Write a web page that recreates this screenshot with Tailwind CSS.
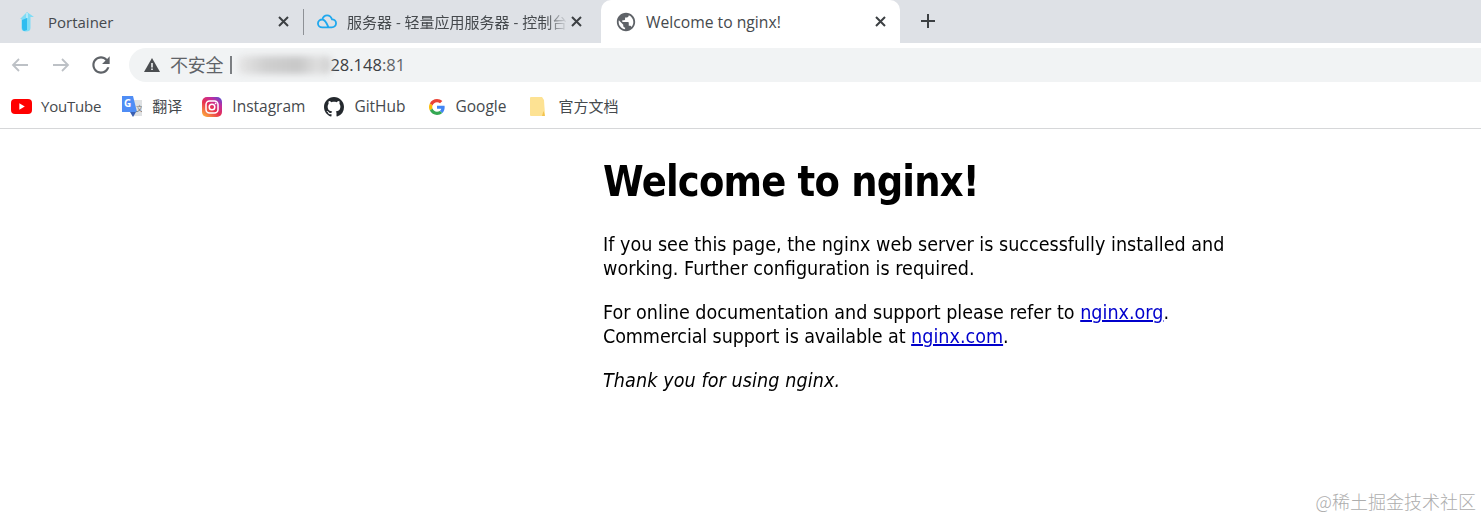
<!DOCTYPE html>
<html lang="zh">
<head>
    <meta charset="UTF-8">
    <title>Welcome to nginx!</title>
    <script src="https://cdn.jsdelivr.net/npm/@tailwindcss/browser@4"></script>
</head>
<body class="relative w-[1481px] h-[518px] overflow-hidden bg-white font-['Open_Sans','Noto_Sans_CJK_SC',sans-serif]">
    <!-- tabs -->
    <div class="flex h-[43px] bg-[#dee1e6] text-[15px] text-[#45494d]">
        <div class="flex items-center w-[303px] pl-[18px] pr-[14px]">
            <svg class="w-[18px] h-[20px] shrink-0" viewBox="0 0 18 20">
                <path d="M9 0 L16 5 L12.5 5 L12.5 16 Q12.5 19.5 8 19.5 Q3.5 19.5 3.5 16 L3.5 7 L2 7 Z" fill="#7fdcf5"/>
                <path d="M4 8 L9 6 V18 L6 19 Q4 18 4 16 Z" fill="#2fbdf0"/>
                <path d="M9 1 V6" stroke="#c5edf8" stroke-width="1.5"/>
            </svg>
            <span class="ml-[12px] flex-1 translate-y-px">Portainer</span>
            <svg class="w-[11px] h-[11px] shrink-0" viewBox="0 0 11 11"><path d="M1 1 L10 10 M10 1 L1 10" stroke="#3c4043" stroke-width="2"/></svg>
        </div>
        <div class="w-px h-[26px] mt-[9px] bg-[#8e9196]"></div>
        <div class="flex items-center w-[291px] pl-[13px] pr-[13px]">
            <svg class="w-[20px] h-[15px] shrink-0" viewBox="0 0 21 15" fill="none">
                <path d="M5.5 13.6 H15.5 C18.2 13.6 20 11.7 20 9.4 C20 7 18 5.3 15.8 5.3 C14.9 2.6 13 1 10.6 1 C8 1 6.2 2.9 5.6 5.4 C3 5.4 1 7.2 1 9.6 C1 11.9 3 13.6 5.5 13.6 Z M5.6 5.4 C8 5.4 9.5 7.5 12 13.4" stroke="#1fa8ee" stroke-width="1.9"/>
            </svg>
            <span class="ml-[10px] w-[221px] overflow-hidden whitespace-nowrap translate-y-px [mask-image:linear-gradient(to_right,black_90%,transparent)]">服务器 - 轻量应用服务器 - 控制台</span>
            <svg class="ml-auto w-[11px] h-[11px] shrink-0" viewBox="0 0 11 11"><path d="M1 1 L10 10 M10 1 L1 10" stroke="#3c4043" stroke-width="2"/></svg>
        </div>
        <div class="flex items-center w-[299px] ml-[6px] pl-[14px] pr-[14px] bg-white rounded-t-[10px]">
            <svg class="w-[22px] h-[22px] shrink-0" viewBox="0 0 24 24"><path fill="#5f6368" d="M12 2C6.48 2 2 6.48 2 12s4.48 10 10 10 10-4.48 10-10S17.52 2 12 2zm-1 17.93c-3.95-.49-7-3.85-7-7.93 0-.62.08-1.21.21-1.79L9 15v1c0 1.1.9 2 2 2v1.93zm6.9-2.54c-.26-.81-1-1.39-1.9-1.39h-1v-3c0-.55-.45-1-1-1H8v-2h2c.55 0 1-.45 1-1V7h2c1.1 0 2-.9 2-2v-.41c2.93 1.19 5 4.06 5 7.41 0 2.08-.8 3.97-2.1 5.39z"/></svg>
            <span class="ml-[9px] flex-1 text-[15.7px] translate-y-px">Welcome to nginx!</span>
            <svg class="w-[11px] h-[11px] shrink-0" viewBox="0 0 11 11"><path d="M1 1 L10 10 M10 1 L1 10" stroke="#3c4043" stroke-width="2"/></svg>
        </div>
        <svg class="w-[16px] h-[16px] ml-[20px] mt-[13px] shrink-0" viewBox="0 0 16 16"><path d="M8 1 V15 M1 8 H15" stroke="#3c4043" stroke-width="2"/></svg>
    </div>

    <!-- address row -->
    <div class="flex items-start h-[40px] pt-[5px] bg-white">
        <svg class="w-[18px] h-[16px] ml-[11px] mt-[9px] shrink-0" viewBox="0 0 18 16" fill="none"><path d="M17 8 H2 M8 2 L2 8 L8 14" stroke="#bdc1c6" stroke-width="1.8"/></svg>
        <svg class="w-[18px] h-[16px] ml-[23px] mt-[9px] shrink-0" viewBox="0 0 18 16" fill="none"><path d="M1 8 H16 M10 2 L16 8 L10 14" stroke="#bdc1c6" stroke-width="1.8"/></svg>
        <svg class="w-[26px] h-[26px] ml-[18px] mt-[4px] shrink-0" viewBox="0 0 24 24"><path fill="#5f6368" d="M17.65 6.35C16.2 4.9 14.21 4 12 4c-4.42 0-7.99 3.58-7.99 8s3.57 8 7.99 8c3.73 0 6.84-2.55 7.73-6h-2.08c-.82 2.33-3.04 4-5.65 4-3.31 0-6-2.69-6-6s2.69-6 6-6c1.66 0 3.14.69 4.22 1.78L13 11h7V4l-2.35 2.35z"/></svg>
        <div class="flex items-center flex-1 h-[34px] ml-[15px] pl-[15px] bg-[#f1f3f4] rounded-l-[17px] text-[18px] text-[#5f6368]">
            <svg class="w-[16px] h-[14px] shrink-0" viewBox="0 0 16 14"><path fill="#4a4d50" d="M8 0 L16 14 H0 Z"/><path fill="#f1f3f4" d="M7.2 5 H8.8 V9.5 H7.2 Z M7.2 10.5 H8.8 V12 H7.2 Z"/></svg>
            <span class="ml-[10px] whitespace-nowrap tracking-[-0.2px]">不安全</span>
            <span class="ml-[7px] w-[2px] h-[18px] bg-[#7b7e82] shrink-0"></span>
            <div class="w-[93px] h-[18px] ml-[6px] mr-[-1px] rounded-[5px] blur-[3px] bg-[linear-gradient(90deg,#e6e6e6_0%,#cfcfcf_30%,#c8c8c8_65%,#dedede_85%,#cfcfcf_100%)]"></div>
            <span class="whitespace-nowrap text-[16.5px]"><span class="text-[#3c4043]">28.148</span>:81</span>
        </div>
    </div>

    <!-- bookmarks -->
    <div class="flex items-center h-[46px] pt-[2px] border-b border-[#d6d7d9] text-[15.5px] text-[#45494d]">
        <svg class="w-[21px] h-[15px] ml-[11px] shrink-0" viewBox="0 0 21 15"><rect width="21" height="15" rx="4" fill="#f00"/><path d="M8.3 4.3 L13.8 7.5 L8.3 10.7 Z" fill="#fff"/></svg>
        <span class="ml-[9px] text-[15px] tracking-[-0.2px]">YouTube</span>
        <svg class="w-[20px] h-[21px] ml-[21px] shrink-0" viewBox="0 0 20 21">
            <path d="M8 4 H20 V20 H10 Z" fill="#dfe1e3"/>
            <path d="M0 0 H11 L15 16 H0 Z" fill="#4f8df5"/>
            <path d="M8 16 H14 L11 21 Z" fill="#3a5fb0"/>
            <text x="2" y="11" font-size="10" font-weight="700" fill="#fff" font-family="Open Sans">G</text>
            <text x="14" y="15" font-size="7" fill="#777" font-family="Noto Sans CJK SC">文</text>
        </svg>
        <span class="ml-[10px] text-[15px]">翻译</span>
        <svg class="w-[20px] h-[20px] ml-[20px] shrink-0" viewBox="0 0 20 20" fill="none">
            <defs><linearGradient id="ig" x1="0.1" y1="1" x2="0.9" y2="0"><stop offset="0" stop-color="#fdb03a"/><stop offset="0.45" stop-color="#e8304f"/><stop offset="0.75" stop-color="#c22c9e"/><stop offset="1" stop-color="#5a4bd0"/></linearGradient></defs>
            <rect width="20" height="20" rx="5" fill="url(#ig)"/>
            <rect x="4" y="4" width="12" height="12" rx="3.5" stroke="#fff" stroke-width="1.5"/>
            <circle cx="10" cy="10" r="2.8" stroke="#fff" stroke-width="1.5"/>
            <circle cx="13.6" cy="6.4" r="0.9" fill="#fff"/>
        </svg>
        <span class="ml-[10px]">Instagram</span>
        <svg class="w-[20px] h-[20px] ml-[19px] shrink-0" viewBox="0 0 16 16"><path fill="#24292e" d="M8 0C3.58 0 0 3.58 0 8c0 3.54 2.29 6.53 5.47 7.59.4.07.55-.17.55-.38 0-.19-.01-.82-.01-1.49-2.01.37-2.53-.49-2.69-.94-.09-.23-.48-.94-.82-1.13-.28-.15-.68-.52-.01-.53.63-.01 1.08.58 1.23.82.72 1.21 1.87.87 2.33.66.07-.52.28-.87.51-1.07-1.78-.2-3.64-.89-3.64-3.95 0-.87.31-1.59.82-2.15-.08-.2-.36-1.02.08-2.12 0 0 .67-.21 2.2.82.64-.18 1.32-.27 2-.27s1.36.09 2 .27c1.53-1.04 2.2-.82 2.2-.82.44 1.1.16 1.92.08 2.12.51.56.82 1.27.82 2.15 0 3.07-1.87 3.75-3.65 3.95.29.25.54.73.54 1.48 0 1.07-.01 1.93-.01 2.2 0 .21.15.46.55.38A8.01 8.01 0 0 0 16 8c0-4.42-3.58-8-8-8z"/></svg>
        <span class="ml-[10px]">GitHub</span>
        <svg class="w-[16px] h-[16px] ml-[23px] shrink-0" viewBox="0 0 48 48">
            <path fill="#EA4335" d="M24 9.5c3.54 0 6.71 1.22 9.21 3.6l6.85-6.85C35.9 2.38 30.47 0 24 0 14.62 0 6.51 5.38 2.56 13.22l7.98 6.19C12.43 13.72 17.74 9.5 24 9.5z"/>
            <path fill="#4285F4" d="M46.98 24.55c0-1.57-.15-3.09-.38-4.55H24v9.02h12.94c-.58 2.96-2.26 5.48-4.78 7.18l7.73 6c4.51-4.18 7.09-10.36 7.09-17.65z"/>
            <path fill="#FBBC05" d="M10.53 28.59c-.48-1.45-.76-2.99-.76-4.59s.27-3.14.76-4.59l-7.98-6.19C.92 16.46 0 20.12 0 24c0 3.88.92 7.54 2.56 10.78l7.97-6.19z"/>
            <path fill="#34A853" d="M24 48c6.48 0 11.93-2.13 15.89-5.81l-7.73-6c-2.15 1.45-4.92 2.3-8.16 2.3-6.26 0-11.57-4.22-13.47-9.91l-7.98 6.19C6.51 42.62 14.62 48 24 48z"/>
        </svg>
        <span class="ml-[11px]">Google</span>
        <svg class="w-[16px] h-[19px] ml-[24px] shrink-0" viewBox="0 0 16 19"><path d="M0 1 Q0 0 1 0 H12 L14 3 L15 18 Q15 19 14 19 H1 Q0 19 0 18 Z" fill="#fde293"/><path d="M12 19 L13.5 14 L15 19 Z" fill="#f3c34f"/></svg>
        <span class="ml-[12px] text-[15px]">官方文档</span>
    </div>

    <!-- nginx page: DejaVu squeezed a bit, reads like Tahoma -->
    <div class="ml-[603px] w-[730px] origin-left scale-x-[0.88] text-black font-['DejaVu_Sans',sans-serif] text-[20px] leading-[24px]">
        <h1 class="mt-[29px] text-[42px] leading-[47px] font-bold tracking-[-0.9px]">Welcome to nginx!</h1>
        <p class="mt-[27px]">If you see this page, the nginx web server is successfully installed and<br>working. Further configuration is required.</p>
        <p class="mt-[20px]">For online documentation and support please refer to <a href="#" class="underline text-[#0000cc]">nginx.org</a>.<br><span class="tracking-[-0.13px]">Commercial support is available at</span> <a href="#" class="underline text-[#0000cc]">nginx.com</a>.</p>
        <p class="mt-[20px] italic tracking-[0.1px]">Thank you for using nginx.</p>
    </div>

    <!-- watermark -->
    <div class="absolute right-[5px] bottom-[5px] text-[18px] leading-[24px] text-[#adadad] font-['Noto_Sans_CJK_SC',sans-serif] font-light">@稀土掘金技术社区</div>
</body>
</html>
